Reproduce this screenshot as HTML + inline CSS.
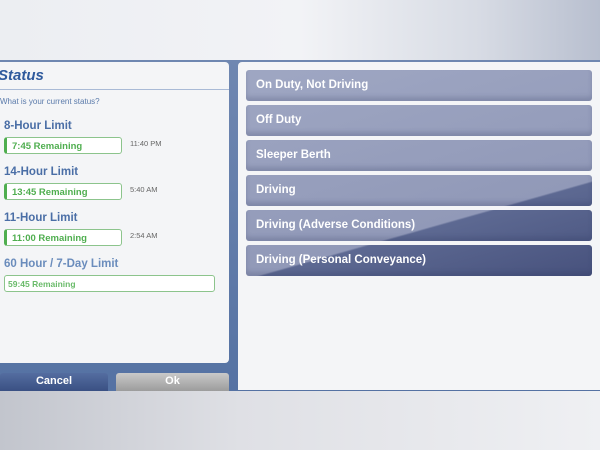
<!DOCTYPE html>
<html><head><meta charset="utf-8"><style>
*{margin:0;padding:0;box-sizing:border-box}
body{width:600px;height:450px;overflow:hidden;position:relative;font-family:"Liberation Sans",sans-serif;background:linear-gradient(90deg,#c4c7cf 0%,#e4e5e9 40%,#f1f2f4 100%)}
.top{position:absolute;left:0;top:0;width:600px;height:60px;background:linear-gradient(90deg,#eceef2 0%,#f2f3f6 50%,#d7dbe4 80%,#b8bfcf 100%)}
.frame{position:absolute;left:0;top:60px;width:600px;height:331px;background:linear-gradient(180deg,#6f87b1,#5572a3)}
.left{position:absolute;left:0;top:62px;width:229px;height:301px;background:#f4f5f7;border-radius:0 4px 4px 0}
.title{position:absolute;left:-2px;top:5px;font-size:15px;font-weight:bold;font-style:italic;color:#2f5a9d}
.hr{position:absolute;left:0;top:27px;width:229px;height:1px;background:#a9bad6}
.q{position:absolute;left:0;top:35px;font-size:8px;color:#5b7bab}
.lim{position:absolute;left:4px;font-size:11.5px;font-weight:bold;color:#4a6ea6}
.box{position:absolute;left:4px;width:118px;height:17px;border:1px solid #8cc48c;border-radius:3px;background:#fff;font-size:9.5px;font-weight:bold;color:#4fae4f;padding:3px 0 0 5px;border-left:3px solid #4fae4f}
.tm{position:absolute;left:130px;font-size:7.5px;color:#666}
.btn{position:absolute;top:373px;height:18px;font-size:11px;font-weight:bold;color:#fff;text-align:center;line-height:17px;border-radius:3px 3px 0 0}
.right{position:absolute;left:238px;top:62px;width:362px;height:328px;background:#f4f5f7;border-radius:4px 0 0 0}
.s{position:absolute;left:246px;width:346px;height:31px;border-radius:3px;color:#fff;font-size:11.5px;font-weight:bold;padding:0 10px;line-height:30px;
background:linear-gradient(164.2deg,#a8b0ca 0%,#9199b8 56.2%,#5d6992 56.5%,#424c78 75%) fixed;box-shadow:inset 0 -4px 5px rgba(40,50,90,.2)}
.bot{position:absolute;left:0;top:391px;width:600px;height:59px;background:linear-gradient(90deg,#c2c5cd 0%,#dfe0e5 40%,#eff0f3 100%)}
</style></head><body>
<div class="top"></div>
<div class="frame"></div>
<div class="left">
<div class="title">Status</div><div class="hr"></div>
<div class="q">What is your current status?</div>
<div class="lim" style="top:58px">8-Hour Limit</div>
<div class="box" style="top:75px">7:45 Remaining</div><div class="tm" style="top:77px">11:40 PM</div>
<div class="lim" style="top:104px">14-Hour Limit</div>
<div class="box" style="top:121px">13:45 Remaining</div><div class="tm" style="top:123px">5:40 AM</div>
<div class="lim" style="top:150px">11-Hour Limit</div>
<div class="box" style="top:167px">11:00 Remaining</div><div class="tm" style="top:169px">2:54 AM</div>
<div class="lim" style="top:196px;color:#6a8cbc">60 Hour / 7-Day Limit</div>
<div class="box" style="top:213px;width:211px;border-left:1px solid #8cc48c;font-size:8.5px;color:#6abb6a;padding-left:3px">59:45 Remaining</div>
</div>
<div class="btn" style="left:0;width:108px;background:linear-gradient(#546da0,#3a5083)">Cancel</div>
<div class="btn" style="left:116px;width:113px;background:linear-gradient(#c9c9c9,#9c9c9c)">Ok</div>
<div class="right"></div>
<div class="s" style="top:70px">On Duty, Not Driving</div>
<div class="s" style="top:105px">Off Duty</div>
<div class="s" style="top:140px">Sleeper Berth</div>
<div class="s" style="top:175px">Driving</div>
<div class="s" style="top:210px">Driving (Adverse Conditions)</div>
<div class="s" style="top:245px">Driving (Personal Conveyance)</div>
<div class="bot"></div>
</body></html>
